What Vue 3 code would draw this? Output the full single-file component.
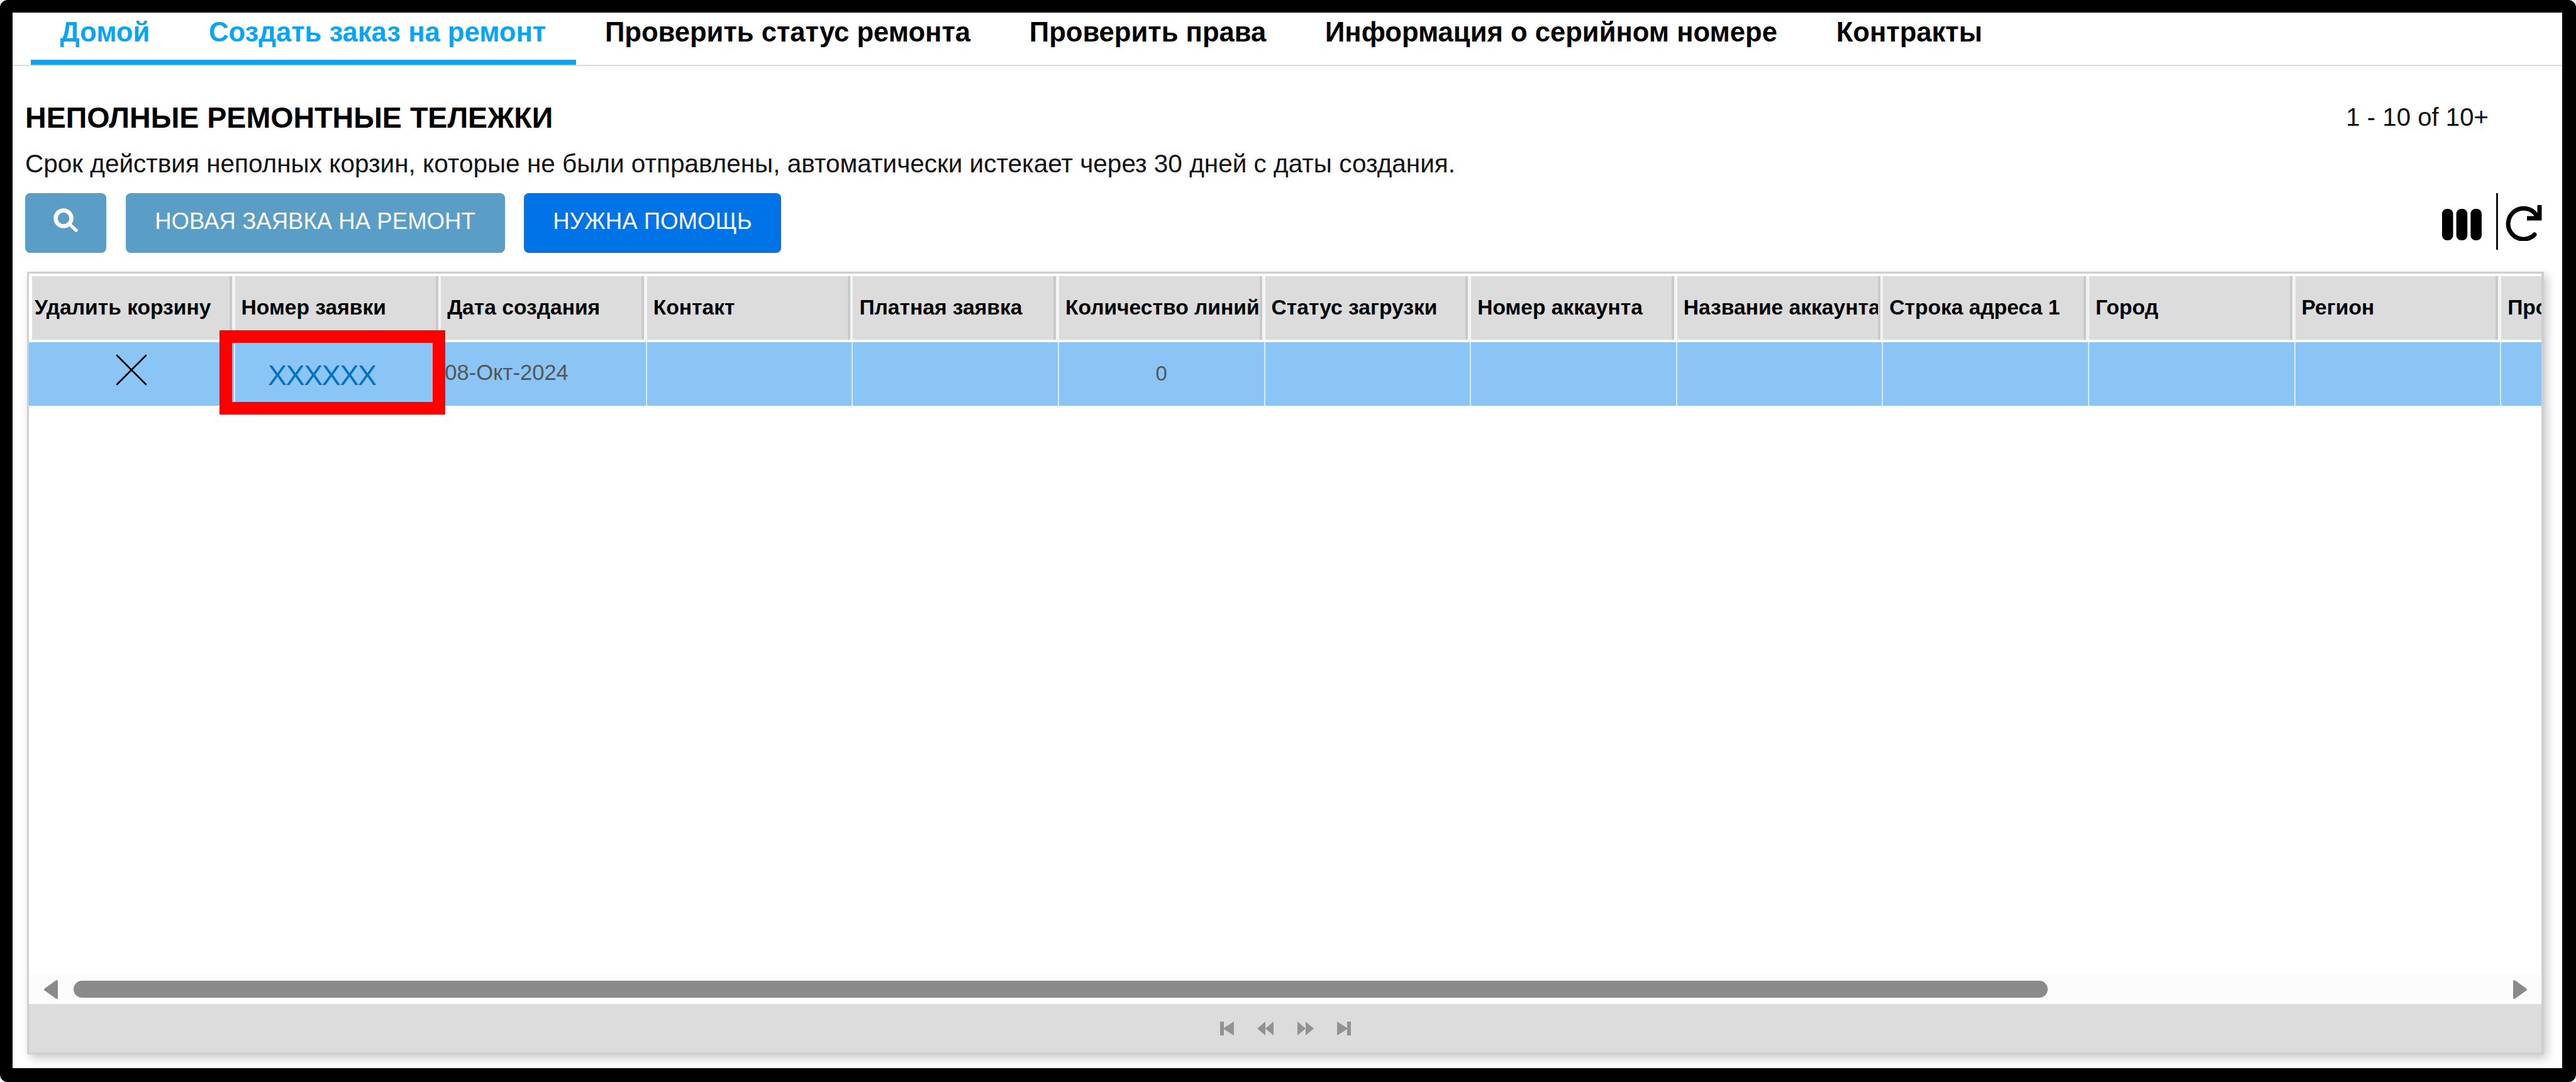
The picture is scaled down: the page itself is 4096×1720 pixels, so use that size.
<script setup>
const tabs = [
  { label: 'Домой', active: true },
  { label: 'Создать заказ на ремонт', active: true },
  { label: 'Проверить статус ремонта' },
  { label: 'Проверить права' },
  { label: 'Информация о серийном номере' },
  { label: 'Контракты' }
]
const columns = ['Удалить корзину', 'Номер заявки', 'Дата создания', 'Контакт', 'Платная заявка', 'Количество линий', 'Статус загрузки', 'Номер аккаунта', 'Название аккаунта', 'Строка адреса 1', 'Город', 'Регион', 'Провинция']
</script>

<template>
  <div class="frame">
    <nav class="nav">
      <a v-for="t in tabs" :key="t.label" class="tab" :class="{ active: t.active }">{{ t.label }}</a>
    </nav>

    <main class="content">
      <div class="title-row">
        <h1 class="title">НЕПОЛНЫЕ РЕМОНТНЫЕ ТЕЛЕЖКИ</h1>
        <span class="count">1 - 10 of 10+</span>
      </div>
      <p class="desc">Срок действия неполных корзин, которые не были отправлены, автоматически истекает через 30 дней с даты создания.</p>

      <div class="toolbar">
        <button class="btn btn-search" aria-label="Поиск">
          <svg width="40" height="39" viewBox="0 0 40 39"><circle cx="16" cy="16" r="12.5" fill="none" stroke="#fff" stroke-width="6.5"/><path d="M25 25 L36 35" stroke="#fff" stroke-width="5.5" stroke-linecap="round"/></svg>
        </button>
        <button class="btn btn-muted">НОВАЯ ЗАЯВКА НА РЕМОНТ</button>
        <button class="btn btn-help">НУЖНА ПОМОЩЬ</button>
        <div class="tools">
          <svg class="ico-cols" width="63" height="50" viewBox="0 0 63 50"><rect x="0" width="17.6" height="50" rx="8"/><rect x="22.7" width="17.6" height="50" rx="8"/><rect x="45.4" width="17.6" height="50" rx="8"/></svg>
          <span class="tool-sep"></span>
          <svg class="ico-refresh" width="61" height="59" viewBox="0 0 61 59"><path d="M47 49 A24.5 24.5 0 1 1 50 18" fill="none" stroke="#000" stroke-width="7" stroke-linecap="round"/><path d="M55 2 V23 H35" fill="none" stroke="#000" stroke-width="7"/></svg>
        </div>
      </div>

      <section class="grid-box">
        <div class="grid-scroll">
          <div class="head">
            <div v-for="c in columns" :key="c" class="hcell">{{ c }}</div>
          </div>
          <div class="row">
            <div class="cell cell-x">
              <svg width="50" height="50" viewBox="0 0 50 50"><path d="M2 2 L48 48 M48 2 L2 48" stroke="#000" stroke-width="2.6" stroke-linecap="round"/></svg>
            </div>
            <div class="cell cell-link"><a class="link">XXXXXX</a><span class="marker"></span></div>
            <div class="cell cell-date">08-Окт-2024</div>
            <div class="cell"></div>
            <div class="cell"></div>
            <div class="cell cell-num">0</div>
            <div class="cell"></div>
            <div class="cell"></div>
            <div class="cell"></div>
            <div class="cell"></div>
            <div class="cell"></div>
            <div class="cell"></div>
            <div class="cell"></div>
          </div>
        </div>
        <div class="scrollbar">
          <svg width="24" height="32" viewBox="0 0 24 32"><path d="M21 3 L3 16 L21 29 Z" fill="#8a8a8a" stroke="#8a8a8a" stroke-width="4" stroke-linejoin="round"/></svg>
          <div class="track"><div class="thumb"></div></div>
          <svg width="24" height="32" viewBox="0 0 24 32"><path d="M3 3 L21 16 L3 29 Z" fill="#8a8a8a" stroke="#8a8a8a" stroke-width="4" stroke-linejoin="round"/></svg>
        </div>
        <footer class="pager">
          <svg width="24" height="24" viewBox="0 0 24 24"><path d="M1 1 H7 V11 L23 1 V23 L7 13 V23 H1 Z"/></svg>
          <svg width="27" height="24" viewBox="0 0 27 24"><path d="M0 12 L13 1 V23 Z M13 12 L26 1 V23 Z"/></svg>
          <svg width="27" height="24" viewBox="0 0 27 24"><path d="M27 12 L14 1 V23 Z M14 12 L1 1 V23 Z"/></svg>
          <svg width="24" height="24" viewBox="0 0 24 24"><path d="M23 1 H17 V11 L1 1 V23 L17 13 V23 H23 Z"/></svg>
        </footer>
      </section>
    </main>
  </div>
</template>

<style>
html, body { margin: 0; background: #fff; }
</style>

<style scoped>
.frame {
  box-sizing: border-box;
  width: 4096px;
  height: 1720px;
  border: solid #000;
  border-width: 20px 22px 22px 20px;
  border-radius: 12px;
  background: #fff;
  font-family: "Liberation Sans", Arial, sans-serif;
  color: #000;
  overflow: hidden;
}
.nav {
  display: flex;
  height: 83px;
  padding: 0 8px 0 30px;
  border-bottom: 2px solid #ddd;
  box-sizing: content-box;
}
.tab {
  padding: 0 48.3px 0 47.5px;
  margin: 0 -1px;
  height: 83px;
  box-sizing: border-box;
  font-size: 43.6px;
  font-weight: 700;
  line-height: 62px;
  white-space: nowrap;
}
.tab:first-child { padding-left: 46.5px; }
.tab.active {
  color: #09a5f5;
  border-bottom: 8px solid #09a5f5;
}
.content {
  display: flex;
  flex-direction: column;
  padding: 0 29px 0 20px;
}
.title-row {
  display: flex;
  justify-content: space-between;
  align-items: center;
  margin-top: 57px;
  height: 50px;
}
.title {
  margin: 0;
  font-size: 46.6px;
  line-height: 50px;
  font-weight: 700;
}
.count {
  font-size: 40.2px;
  margin-right: 88px;
  color: #111;
}
.desc {
  margin: 24px 0 0;
  font-size: 40.5px;
  line-height: 48px;
  color: #111;
}
.toolbar {
  display: flex;
  align-items: stretch;
  gap: 30.5px;
  height: 95px;
  margin-top: 23px;
}
.btn {
  border: 0;
  padding: 0 0 5px;
  border-radius: 8px;
  color: #fff;
  font-family: inherit;
  font-size: 36.6px;
  display: flex;
  align-items: center;
  justify-content: center;
}
.btn-search { width: 129px; background: #5a9dc6; padding-bottom: 9px; }
.btn-muted { width: 603px; background: #5a9dc6; }
.btn-help { width: 409px; background: #0073e6; }
.tools {
  margin-left: auto;
  margin-right: 1px;
  display: flex;
  align-items: flex-start;
}
.ico-cols { margin-top: 25px; }
.tool-sep {
  width: 3px;
  height: 90px;
  background: #111;
  margin: 0 11px 0 23px;
}
.ico-refresh { margin-top: 17px; }

.grid-box {
  margin-top: 30px;
  margin-left: 3px;
  width: 4002px;
  height: 1244px;
  box-sizing: border-box;
  border: 3px solid #cfcfcf;
  border-right-width: 4px;
  box-shadow: 5px 6px 14px rgba(0, 0, 0, .22);
  display: flex;
  flex-direction: column;
  background: #fff;
  overflow: hidden;
}
.grid-scroll {
  flex: 1;
  min-height: 0;
  padding-top: 4px;
  overflow: hidden;
}
.head, .row {
  display: grid;
  grid-template-columns: repeat(13, 327.6px);
  width: max-content;
}
.head { height: 105px; }
.hcell {
  box-sizing: border-box;
  height: 101px;
  background: #dcdcdc;
  border-right: 4.7px solid #c9c9c9;
  box-shadow: 4.7px 0 0 #f4f4f4;
  margin-right: 4.7px;
  padding-left: 10px;
  font-size: 33.6px;
  font-weight: 700;
  line-height: 100px;
  white-space: nowrap;
  overflow: hidden;
}
.hcell:first-child { margin-left: 5px; padding-left: 4px; }
.row {
  height: 101px;
  background: #8bc5f6;
}
.cell {
  position: relative;
  box-sizing: border-box;
  height: 101px;
  border-right: 2.5px solid #dfe9f2;
  display: flex;
  align-items: center;
  font-size: 33px;
  color: #555;
}
.cell-x { justify-content: center; padding-bottom: 14px; padding-left: 0; }
.cell-link { padding-left: 52.4px; padding-top: 5px; }
.link {
  font-size: 45px;
  letter-spacing: -1.4px;
  color: #0070c0;
}
.marker {
  position: absolute;
  left: -24.6px;
  top: -19px;
  width: 359px;
  height: 134px;
  box-sizing: border-box;
  border: 20px solid #f00;
  z-index: 2;
}
.cell-date { white-space: nowrap; font-size: 34.6px; padding-left: 6px; padding-bottom: 4px; }
.cell-num { justify-content: center; padding-bottom: 2px; }

.scrollbar {
  flex: none;
  height: 47px;
  background: #fcfcfc;
  display: flex;
  align-items: center;
  padding: 0 22px 0 23px;
}
.track { flex: 1; padding: 0 24px; }
.thumb {
  width: 3139px;
  height: 27px;
  border-radius: 14px;
  background: #8a8a8a;
}
.pager {
  flex: none;
  height: 77px;
  background: #dcdcdc;
  display: flex;
  align-items: center;
  justify-content: center;
  gap: 36px;
  box-sizing: border-box;
  fill: #929292;
}
</style>
